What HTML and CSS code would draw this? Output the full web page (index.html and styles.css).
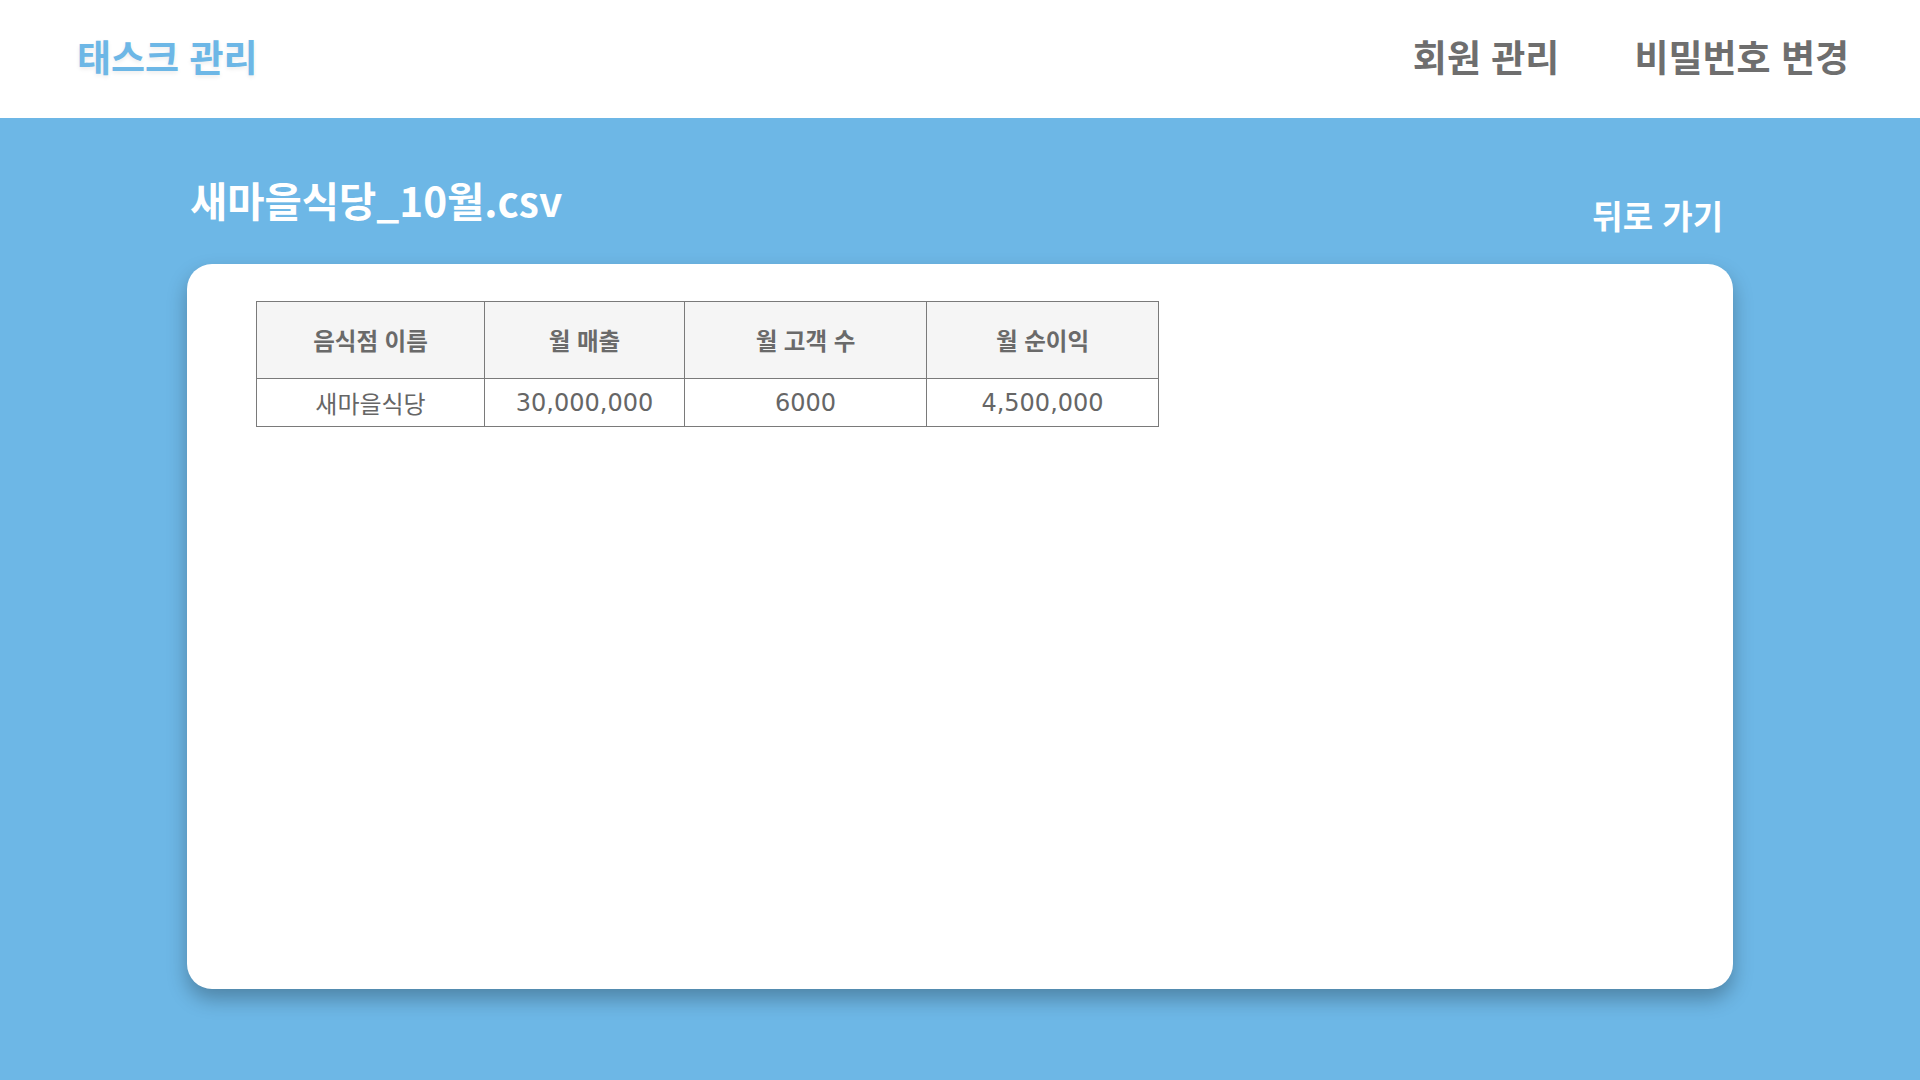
FILE: index.html
```html
<!DOCTYPE html>
<html lang="ko">
<head>
<meta charset="utf-8">
<title>태스크 관리</title>
<link rel="stylesheet" href="styles.css">
</head>
<body>
<header class="topbar">
  <a class="brand">태스크 관리</a>
  <nav class="nav">
    <a class="nav-link">회원 관리</a>
    <a class="nav-link">비밀번호 변경</a>
  </nav>
</header>
<main class="main">
  <div class="title-row">
    <h1 class="file-title">새마을식당_10월.csv</h1>
    <a class="back-link">뒤로 가기</a>
  </div>
  <section class="card">
    <table class="data-table">
      <thead>
        <tr>
          <th class="col-name">음식점 이름</th>
          <th class="col-sales">월 매출</th>
          <th class="col-customers">월 고객 수</th>
          <th class="col-profit">월 순이익</th>
        </tr>
      </thead>
      <tbody>
        <tr>
          <td>새마을식당</td>
          <td>30,000,000</td>
          <td>6000</td>
          <td>4,500,000</td>
        </tr>
      </tbody>
    </table>
  </section>
</main>
</body>
</html>
```

FILE: styles.css
```css
* { box-sizing: border-box; }
html, body { margin: 0; padding: 0; }
body {
  width: 1920px;
  height: 1080px;
  background: #6db7e6;
  font-family: "Noto Sans", "Noto Sans CJK KR", sans-serif;
  overflow: hidden;
}
.topbar {
  height: 118px;
  background: #ffffff;
  display: flex;
  align-items: center;
  justify-content: space-between;
  padding: 0 71px 6px 77px;
}
.brand {
  font-family: "Noto Sans CJK KR", sans-serif;
  font-size: 37px;
  line-height: 1;
  font-weight: 700;
  color: #6db7e6;
  text-shadow: 0 2px 4px rgba(0,0,0,0.08);
}
.nav { display: flex; gap: 75px; }
.nav-link {
  font-family: "Noto Sans CJK KR", sans-serif;
  font-size: 37px;
  line-height: 1;
  font-weight: 700;
  color: #6e6e6e;
}
.main {
  width: 1546px;
  margin: 0 0 0 187px;
}
.title-row {
  display: flex;
  justify-content: space-between;
  align-items: flex-start;
  padding: 0 10px 0 3px;
}
.file-title {
  margin: 62px 0 0 0;
  font-family: "Noto Sans CJK KR", sans-serif;
  font-size: 40.5px;
  line-height: 1;
  font-weight: 700;
  color: #ffffff;
}
.back-link {
  margin-top: 81px;
  font-family: "Noto Sans CJK KR", sans-serif;
  font-size: 33px;
  line-height: 1;
  font-weight: 700;
  color: #ffffff;
}
.card {
  margin-top: 32px;
  height: 725px;
  background: #ffffff;
  border-radius: 25px;
  box-shadow: 0 10px 20px rgba(0,0,0,0.28);
  padding: 37px 69px;
}
.data-table {
  border-collapse: collapse;
  table-layout: fixed;
  color: #666666;
}
.data-table th,
.data-table td {
  border: 1px solid #7a7a7a;
  text-align: center;
  padding: 0;
}
.data-table th {
  height: 77px;
  background: #f5f5f5;
  font-family: "Noto Sans CJK KR", sans-serif;
  font-size: 23.5px;
  font-weight: 700;
  color: #6a6a6a;
}
.data-table td {
  height: 48px;
  font-family: "DejaVu Sans", "Noto Sans CJK KR", sans-serif;
  font-size: 24px;
  font-weight: 400;
  color: #666666;
}
.col-name { width: 228px; }
.col-sales { width: 200px; }
.col-customers { width: 242px; }
.col-profit { width: 232px; }
```
